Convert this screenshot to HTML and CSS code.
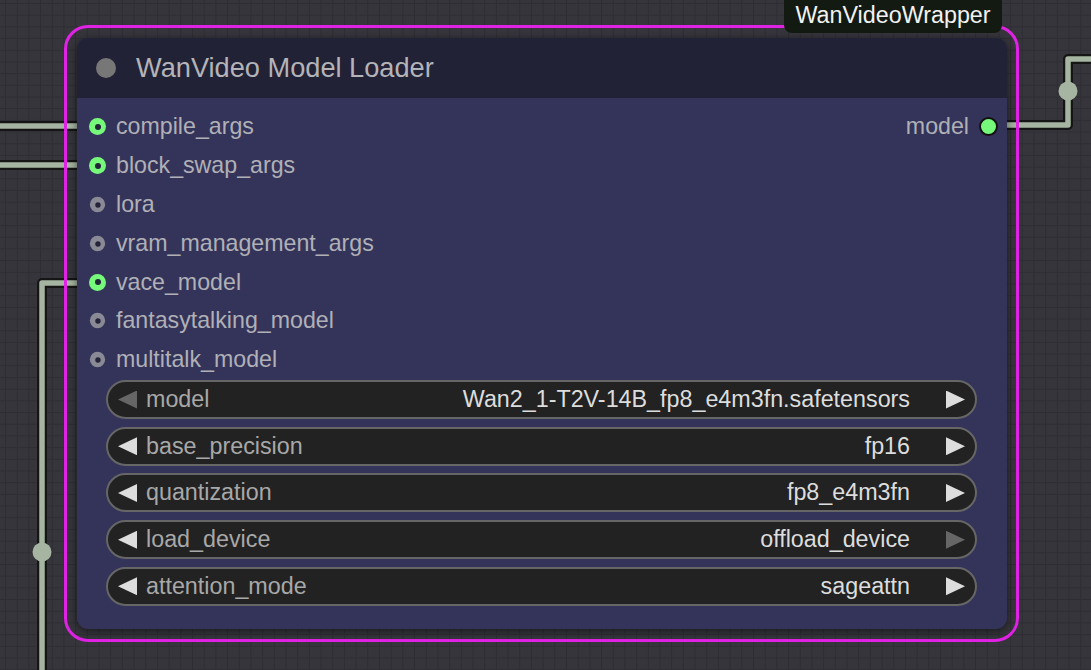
FILE: index.html
```html
<!DOCTYPE html>
<html>
<head>
<meta charset="utf-8">
<link rel="stylesheet" href="styles.css">
</head>
<body>
<div class="canvas">
  <svg class="wires" width="1091" height="670" viewBox="0 0 1091 670">
    <g class="wire-outline">
      <path d="M -10 126 H 85"/>
      <path d="M -10 165 H 85"/>
      <path d="M 85 283 H 42 V 690"/>
      <path d="M 1000 125 H 1068 V 59 H 1100"/>
    </g>
    <g class="wire-inner">
      <path d="M -10 126 H 85"/>
      <path d="M -10 165 H 85"/>
      <path d="M 85 283 H 42 V 690"/>
      <path d="M 1000 125 H 1068 V 59 H 1100"/>
    </g>
    <circle class="reroute" cx="42" cy="552" r="9.5"/>
    <circle class="reroute" cx="1068" cy="91" r="9.5"/>
  </svg>

  <div class="group-outline"></div>
  <div class="group-label">WanVideoWrapper</div>

  <div class="node">
    <div class="node-title">
      <span class="title-dot"></span>
      <span class="title-text">WanVideo Model Loader</span>
    </div>
    <div class="node-body">
      <div class="slots">
        <div class="slot-row">
          <div class="slot"><span class="dot on"></span>compile_args</div>
          <div class="slot out">model<span class="dot-out"></span></div>
        </div>
        <div class="slot-row"><div class="slot"><span class="dot on"></span>block_swap_args</div></div>
        <div class="slot-row"><div class="slot"><span class="dot off"></span>lora</div></div>
        <div class="slot-row"><div class="slot"><span class="dot off"></span>vram_management_args</div></div>
        <div class="slot-row"><div class="slot"><span class="dot on"></span>vace_model</div></div>
        <div class="slot-row"><div class="slot"><span class="dot off"></span>fantasytalking_model</div></div>
        <div class="slot-row"><div class="slot"><span class="dot off"></span>multitalk_model</div></div>
      </div>
      <div class="widgets">
        <div class="widget">
          <span class="arrow left dim"></span>
          <span class="w-label">model</span>
          <span class="w-value">Wan2_1-T2V-14B_fp8_e4m3fn.safetensors</span>
          <span class="arrow right"></span>
        </div>
        <div class="widget">
          <span class="arrow left"></span>
          <span class="w-label">base_precision</span>
          <span class="w-value">fp16</span>
          <span class="arrow right"></span>
        </div>
        <div class="widget">
          <span class="arrow left"></span>
          <span class="w-label">quantization</span>
          <span class="w-value">fp8_e4m3fn</span>
          <span class="arrow right"></span>
        </div>
        <div class="widget">
          <span class="arrow left"></span>
          <span class="w-label">load_device</span>
          <span class="w-value">offload_device</span>
          <span class="arrow right dim"></span>
        </div>
        <div class="widget">
          <span class="arrow left"></span>
          <span class="w-label">attention_mode</span>
          <span class="w-value">sageattn</span>
          <span class="arrow right"></span>
        </div>
      </div>
    </div>
  </div>
</div>
</body>
</html>
```

FILE: styles.css
```css
* { box-sizing: border-box; }
html, body {
  margin: 0;
  padding: 0;
  width: 1091px;
  height: 670px;
  overflow: hidden;
  font-family: "Liberation Sans", Arial, sans-serif;
}
.canvas {
  position: relative;
  width: 1091px;
  height: 670px;
  overflow: hidden;
  background-color: #36353c;
  background-image:
    linear-gradient(to right, #2e2d33 1px, transparent 1px),
    linear-gradient(to bottom, #2e2d33 1px, transparent 1px);
  background-size: 11.7px 11.7px;
  background-position: 5px 3px;
}
.wires {
  position: absolute;
  left: 0;
  top: 0;
}
.wire-outline path {
  fill: none;
  stroke: #151516;
  stroke-width: 10;
  stroke-linejoin: round;
}
.wire-inner path {
  fill: none;
  stroke: #a6b5a1;
  stroke-width: 5.5;
  stroke-linejoin: round;
}
.reroute { fill: #a6b5a1; }

.group-outline {
  position: absolute;
  left: 64px;
  top: 25px;
  width: 955px;
  height: 617px;
  border: 3px solid #e022e4;
  border-radius: 24px;
}
.group-label {
  position: absolute;
  left: 784px;
  top: -6px;
  width: 218px;
  height: 39px;
  padding-top: 6px;
  background: #121a12;
  border-radius: 8px;
  color: #f2f2f2;
  font-size: 23.3px;
  line-height: 31px;
  text-align: center;
}

.node {
  position: absolute;
  left: 77px;
  top: 38px;
  width: 930px;
  height: 591px;
  border-radius: 11px;
  background: #34345a;
  box-shadow: 0 2px 8px rgba(0, 0, 0, 0.55);
  overflow: hidden;
  display: flex;
  flex-direction: column;
}
.node-title {
  height: 60px;
  background: #222236;
  display: flex;
  align-items: center;
  padding-left: 19px;
  gap: 20px;
}
.title-dot {
  width: 20px;
  height: 20px;
  border-radius: 50%;
  background: #777777;
}
.title-text {
  color: #b4b4b8;
  font-size: 27.2px;
  line-height: 30px;
  padding-top: 0;
}
.node-body {
  display: flex;
  flex-direction: column;
  padding: 9.5px 30px 0 29px;
}
.slots {
  display: flex;
  flex-direction: column;
  margin-left: -29px;
  margin-right: -30px;
}
.slot-row {
  height: 38.8px;
  display: flex;
  align-items: center;
  justify-content: space-between;
}
.slot {
  display: flex;
  align-items: center;
  color: #b0b0b6;
  font-size: 23.2px;
  padding-left: 12px;
}
.slot .dot {
  width: 17px;
  height: 17px;
  border-radius: 50%;
  margin-right: 10px;
  display: flex;
  align-items: center;
  justify-content: center;
}
.slot .dot::after {
  content: "";
  width: 6px;
  height: 6px;
  border-radius: 50%;
  background: #23233a;
}
.dot.on { background: #76f97a; }
.dot.off {
  background: #8a8a96;
  transform: scale(0.9);
}
.slot.out {
  padding-left: 0;
  padding-right: 9px;
}
.dot-out {
  width: 19px;
  height: 19px;
  border-radius: 50%;
  background: #76f97a;
  border: 2px solid #111111;
  margin-left: 10px;
}
.widgets {
  display: flex;
  flex-direction: column;
  gap: 7.7px;
  margin-top: 1px;
}
.widget {
  height: 39px;
  border: 2px solid #666666;
  border-radius: 20px;
  background: #222222;
  display: flex;
  align-items: center;
  padding: 0 10px 0 10px;
  font-size: 23.3px;
}
.arrow {
  width: 19px;
  height: 18px;
  background: #dddddd;
  flex: none;
}
.arrow.left { clip-path: polygon(0 50%, 100% 0, 100% 100%); }
.arrow.right { clip-path: polygon(0 0, 100% 50%, 0 100%); }
.arrow.dim { background: #666666; }
.w-label {
  color: #a8a8a8;
  margin-left: 9px;
}
.w-value {
  color: #dddddd;
  margin-left: auto;
  margin-right: 36px;
}
```
